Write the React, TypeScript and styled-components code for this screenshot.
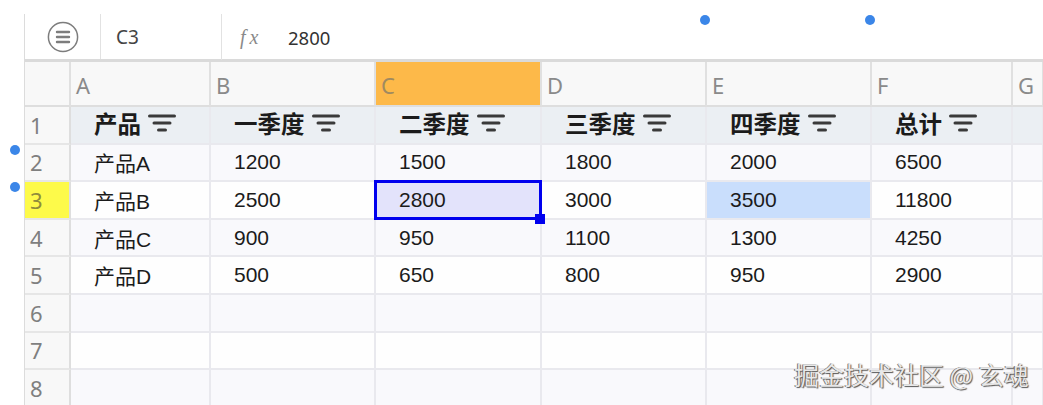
import React from "react";
import styled, { createGlobalStyle } from "styled-components";

const Global = createGlobalStyle`
  html, body { margin: 0; padding: 0; background: #fff; }
  body { font-family: "Liberation Sans", "Noto Sans CJK SC", sans-serif; }
`;

const Page = styled.div`
  position: relative;
  width: 1043px;
  height: 405px;
  overflow: hidden;
  padding: 14px 0 0 24px;
  box-sizing: border-box;
  background: #fff;
`;

const Sheet = styled.div`
  border-left: 1px solid #dcdcdc;
  height: 391px;
  width: 1019px;
  overflow: hidden;
`;

const FormulaBar = styled.div`
  display: flex;
  align-items: center;
  height: 45px;
  border-bottom: 3px solid #dadada;
`;

const MenuSlot = styled.div`
  width: 75px;
  height: 100%;
  display: flex;
  align-items: center;
  justify-content: center;
  border-right: 1px solid #e2e2e2;
`;

const NameBox = styled.div`
  width: 105px;
  height: 100%;
  padding: 1px 0 0 15px;
  box-sizing: content-box;
  display: flex;
  align-items: center;
  border-right: 1px solid #e2e2e2;
  font: 19px "Noto Sans", sans-serif;
  color: #444;
`;

const Fx = styled.span`
  margin: 1px 0 0 18px;
  width: 48px;
  font: italic 20px "Liberation Serif", serif;
  color: #8a8a8a;
  letter-spacing: 4px;
`;

const FormulaValue = styled.span`
  margin-top: 1px;
  font: 18.5px "Noto Sans", sans-serif;
  color: #333;
`;

const Grid = styled.div`
  display: grid;
  grid-template-columns: 46px 140px 165px 166px 165px 165px 141px 31px;
  grid-template-rows: 45px repeat(8, 37.6px);
`;

const ColHead = styled.div<{ $active?: boolean }>`
  background: ${(p) => (p.$active ? "#fdb949" : "#f8f8f8")};
  border-right: 2px solid #e0e0e0;
  border-bottom: 2px solid #dedede;
  padding: 8px 0 0 5px;
  font: 22px "Noto Sans", sans-serif;
  color: ${(p) => (p.$active ? "#a08a60" : "#8a8a8a")};
  box-sizing: border-box;
`;

const RowHead = styled.div<{ $active?: boolean }>`
  background: ${(p) => (p.$active ? "#fdfa4a" : "#f8f8f8")};
  border-right: 2px solid #dedede;
  border-bottom: 2px solid #e6e6e6;
  padding-left: 5px;
  display: flex;
  align-items: center;
  font: 22px "Noto Sans", sans-serif;
  color: ${(p) => (p.$active ? "#8f8c3c" : "#7f7f7f")};
  box-sizing: border-box;
`;

const Cell = styled.div<{ $odd?: boolean; $head?: boolean; $tint?: boolean }>`
  background: ${(p) =>
    p.$tint ? "#c9defc" : p.$head ? "#ebeff3" : p.$odd ? "#f9f9fc" : "#fefefe"};
  border-right: 2px solid #e9e9ee;
  border-bottom: 2px solid #e9e9ee;
  padding-left: 23px;
  padding-bottom: ${(p) => (p.$head ? "4px" : "0")};
  display: flex;
  align-items: center;
  gap: 7px;
  box-sizing: border-box;
  font-size: ${(p) => (p.$head ? "23.5px" : "21px")};
  font-weight: ${(p) => (p.$head ? 700 : 400)};
  font-family: ${(p) =>
    p.$head
      ? '"Noto Sans CJK SC", sans-serif'
      : '"Liberation Sans", "Noto Sans CJK SC", sans-serif'};
  color: #1b1b1b;
  white-space: nowrap;
`;

const SelectedCell = styled(Cell)`
  position: relative;
  background: #e3e3fb;
`;

const SelectionFrame = styled.span`
  position: absolute;
  inset: -2px;
  border: 3px solid #0000ee;
  z-index: 1;
`;

const FillHandle = styled.span`
  position: absolute;
  right: -5px;
  bottom: -6px;
  width: 10px;
  height: 10px;
  background: #0000ee;
  z-index: 2;
`;

const Dot = styled.span<{ $x: number; $y: number }>`
  position: absolute;
  left: ${(p) => p.$x - 5}px;
  top: ${(p) => p.$y - 5}px;
  width: 10px;
  height: 10px;
  border-radius: 50%;
  background: #3b86e8;
`;

const Watermark = styled.div`
  position: absolute;
  left: 794px;
  top: 356px;
  font: 25px "Noto Sans CJK SC", sans-serif;
  color: #e8e8e8;
  text-shadow: 1px 1px 1px #555, -1px 0 0 #777;
  white-space: nowrap;
`;

const MenuIcon = () => (
  <svg width="32" height="32" viewBox="0 0 32 32" fill="none" stroke="#7d7d7d">
    <circle cx="16" cy="16" r="14.6" strokeWidth="1.5" />
    <path d="M10 11h12M10 16h12M10 21h12" strokeWidth="2.4" strokeLinecap="round" />
  </svg>
);

const FilterIcon = () => (
  <svg width="28" height="20" viewBox="0 0 28 20" fill="none" stroke="#3a3a3a" strokeLinecap="round">
    <path d="M1.5 3h25" strokeWidth="3" />
    <path d="M6 10h16" strokeWidth="3" />
    <path d="M10.5 17h7" strokeWidth="3" />
  </svg>
);

const columns = ["A", "B", "C", "D", "E", "F", "G"];
const headers = ["产品", "一季度", "二季度", "三季度", "四季度", "总计"];
const rows = [
  ["产品A", "1200", "1500", "1800", "2000", "6500"],
  ["产品B", "2500", "2800", "3000", "3500", "11800"],
  ["产品C", "900", "950", "1100", "1300", "4250"],
  ["产品D", "500", "650", "800", "950", "2900"],
  ["", "", "", "", "", ""],
  ["", "", "", "", "", ""],
  ["", "", "", "", "", ""],
];

export default function App() {
  return (
    <Page>
      <Global />
      <Sheet>
        <FormulaBar>
          <MenuSlot>
            <MenuIcon />
          </MenuSlot>
          <NameBox>C3</NameBox>
          <Fx>fx</Fx>
          <FormulaValue>2800</FormulaValue>
        </FormulaBar>
        <Grid>
          <ColHead />
          {columns.map((c) => (
            <ColHead key={c} $active={c === "C"}>
              {c}
            </ColHead>
          ))}
          <RowHead>1</RowHead>
          {headers.map((h) => (
            <Cell key={h} $head>
              {h}
              <FilterIcon />
            </Cell>
          ))}
          <Cell $head />
          {rows.map((row, r) => {
            const num = r + 2;
            const odd = num % 2 === 0;
            return (
              <React.Fragment key={num}>
                <RowHead $active={num === 3}>{num}</RowHead>
                {row.map((v, c) =>
                  num === 3 && c === 2 ? (
                    <SelectedCell key={c}>
                      {v}
                      <SelectionFrame />
                      <FillHandle />
                    </SelectedCell>
                  ) : (
                    <Cell key={c} $odd={odd} $tint={num === 3 && c === 4}>
                      {v}
                    </Cell>
                  )
                )}
                <Cell $odd={odd} />
              </React.Fragment>
            );
          })}
        </Grid>
      </Sheet>
      <Dot $x={705} $y={20} />
      <Dot $x={870} $y={20} />
      <Dot $x={15} $y={150} />
      <Dot $x={15} $y={187} />
      <Watermark>掘金技术社区 @ 玄魂</Watermark>
    </Page>
  );
}
